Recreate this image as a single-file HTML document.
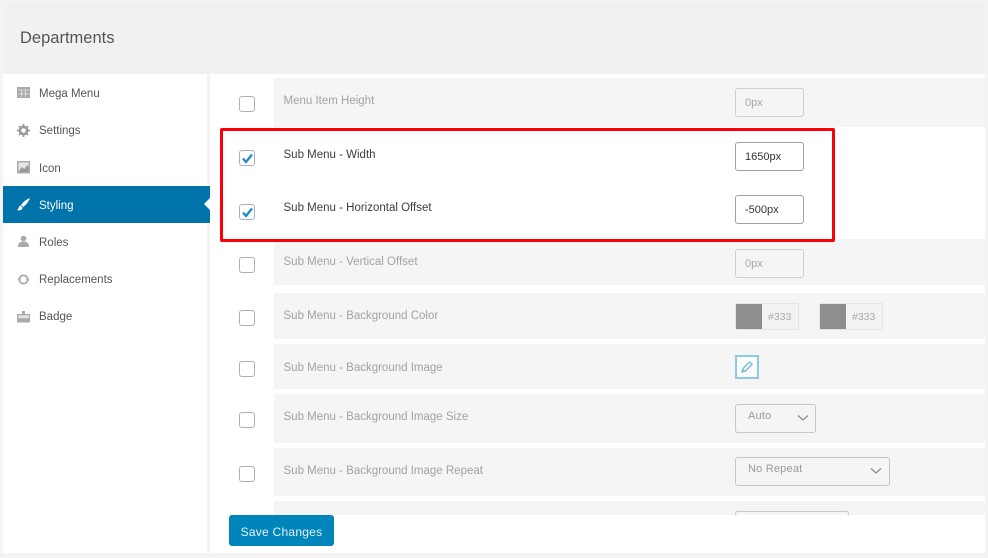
<!DOCTYPE html>
<html><head><meta charset="utf-8">
<style>
html,body{margin:0;padding:0}
body{width:988px;height:558px;position:relative;overflow:hidden;background:#f3f3f3;font-family:"Liberation Sans",sans-serif;font-size:11.5px;color:#444;filter:blur(.3px)}
div,svg,span{position:absolute;box-sizing:border-box}
.t{white-space:nowrap;line-height:14px}
.head{left:3px;top:3px;width:982px;height:71px;background:#f1f1f1}
.side{left:3px;top:74px;width:204px;height:479px;background:#fff}
.main{left:210px;top:74px;width:775px;height:479px;background:#fff}
.row{left:274px;width:711px;background:#f5f5f5}
.cb{left:239px;width:16px;height:16px;border:1.5px solid #a9b1bb;border-radius:3px;background:#fff}
.lab{left:283.5px;color:#a2a2a2}
.on{color:#3d3d3d}
.inp{left:735px;width:69px;height:29px;border:1px solid #ccd0d4;border-radius:3px;color:#a5a5a5;padding:7px 0 0 9px;line-height:14px;font-size:11px}
.inp.a{border-color:#9aa2ab;background:#fff;color:#333;height:29px}
.m{left:39px;color:#555}
.ic{left:17px;width:13px;height:13px}
.sel{left:735px;height:29px;border:1px solid #c3c7cb;border-radius:3px;color:#999;padding:4px 0 0 12px;line-height:14px;font-size:11px;letter-spacing:.2px}
.sw{height:27px;border:1px solid #e4e4e4;border-radius:2px;background:#f3f3f3;width:64px}
.sw i{position:absolute;left:0;top:0;width:26px;height:25px;background:#8e8e8e}
.sw b{position:absolute;left:32px;top:6px;font-weight:normal;font-size:10.5px;color:#aaa;line-height:14px}
</style></head><body>
<div class="head"></div>
<div class="t" style="left:20px;top:28px;font-size:16.5px;line-height:20px;color:#555">Departments</div>
<div class="side"></div>
<div class="main"></div>

<div style="left:3px;top:186px;width:207px;height:37px;background:#0073aa"></div>
<div style="left:204px;top:198px;width:0;height:0;border:6px solid transparent;border-right-color:#fff;border-left:0"></div>

<svg class="ic" style="top:86px" viewBox="0 0 13 13"><rect width="13" height="11" y="1" fill="#aaa"/><path d="M1 4h11M1 8h11M4.500 4v7M8.500 4v7" stroke="#e8e8e8" stroke-width=".8"/></svg>
<div class="t m" style="top:87px">Mega Menu</div>
<svg class="ic" style="top:124px" viewBox="0 0 13 13"><circle cx="6.500" cy="6.500" r="3.600" fill="none" stroke="#999" stroke-width="2.600"/><path d="M6.500 0v13M0 6.500h13M2 2l9 9M11 2l-9 9" stroke="#999" stroke-width="1.800" stroke-dasharray="2 9 2"/></svg>
<div class="t m" style="top:124px">Settings</div>
<svg class="ic" style="top:161px" viewBox="0 0 13 13"><rect width="13" height="12.500" fill="#aaa"/><rect x="1.500" y="1.500" width="10" height="9.500" fill="#e6e6e6"/><path d="M1.500 11l3-5 3 2 2.500-4 1.500 2v5z" fill="#999"/></svg>
<div class="t m" style="top:162px">Icon</div>
<svg class="ic" style="top:198px" viewBox="0 0 13 13"><path d="M13 0C9 1.500 5.500 4.500 4 7l2 2c2.500-1.500 5.500-5 7-9zM3.500 7.500C1.500 8 2 11 0 12c2.500 1 5.500 0 5.500-2.500z" fill="#fff"/></svg>
<div class="t m" style="top:199px;color:#fff">Styling</div>
<svg class="ic" style="top:235px" viewBox="0 0 13 13"><circle cx="6.500" cy="3.500" r="2.800" fill="#aaa"/><path d="M1 12c0-4 2-5.500 5.500-5.500S12 8 12 12z" fill="#aaa"/></svg>
<div class="t m" style="top:236px">Roles</div>
<svg class="ic" style="top:273px" viewBox="0 0 13 13"><circle cx="6.500" cy="6.500" r="4.200" fill="none" stroke="#aaa" stroke-width="1.800"/><path d="M0 6.500l2.500-2 2 2zM13 6.500l-2.500 2-2-2z" fill="#aaa"/></svg>
<div class="t m" style="top:273px">Replacements</div>
<svg class="ic" style="top:310px" viewBox="0 0 13 13"><rect x="0" y="4" width="13" height="8.500" fill="#aaa"/><rect x="1.200" y="5.200" width="10.600" height="3" fill="#e2e2e2"/><rect x="5" y="1" width="3" height="4" fill="#aaa"/></svg>
<div class="t m" style="top:310px">Badge</div>

<!-- rows -->
<div class="row" style="top:78px;height:49px"></div>
<div class="row" style="top:239px;height:46px"></div>
<div class="row" style="top:293px;height:46px"></div>
<div class="row" style="top:344px;height:45px"></div>
<div class="row" style="top:394px;height:49px"></div>
<div class="row" style="top:448px;height:48px"></div>
<div class="row" style="top:501px;height:14px"></div>

<div class="cb" style="top:96px"></div>
<div class="cb" style="top:150px"></div>
<div class="cb" style="top:204px"></div>
<div class="cb" style="top:257px"></div>
<div class="cb" style="top:310px"></div>
<div class="cb" style="top:361px"></div>
<div class="cb" style="top:412px"></div>
<div class="cb" style="top:466px"></div>
<svg style="left:241px;top:152px;width:13px;height:13px" viewBox="0 0 13 13"><path d="M2 6.500l3 3.500 6-7.500" fill="none" stroke="#1e8cbe" stroke-width="2.300"/></svg>
<svg style="left:241px;top:206px;width:13px;height:13px" viewBox="0 0 13 13"><path d="M2 6.500l3 3.500 6-7.500" fill="none" stroke="#1e8cbe" stroke-width="2.300"/></svg>

<div class="t lab" style="top:94px">Menu Item Height</div>
<div class="t lab on" style="top:148px">Sub Menu - Width</div>
<div class="t lab on" style="top:201px">Sub Menu - Horizontal Offset</div>
<div class="t lab" style="top:255px">Sub Menu - Vertical Offset</div>
<div class="t lab" style="top:309px">Sub Menu - Background Color</div>
<div class="t lab" style="top:361px">Sub Menu - Background Image</div>
<div class="t lab" style="top:410px">Sub Menu - Background Image Size</div>
<div class="t lab" style="top:464px">Sub Menu - Background Image Repeat</div>

<div class="t inp" style="top:88px">0px</div>
<div class="t inp a" style="top:142px">1650px</div>
<div class="t inp a" style="top:195px">-500px</div>
<div class="t inp" style="top:249px">0px</div>

<div class="sw" style="left:735px;top:303px"><i></i><b>#333</b></div>
<div class="sw" style="left:819px;top:303px"><i></i><b>#333</b></div>

<div style="left:735px;top:355px;width:24px;height:24px;border:2px solid #8ccbe2;background:#fbfbfb"></div>
<svg style="left:740px;top:360px;width:14px;height:14px" viewBox="0 0 14 14"><path d="M3 8.500L9.500 2l2.500 2.500L5.500 11 2 12z" fill="none" stroke="#7cc0dc" stroke-width="1.500"/><path d="M3 8.500l2.500 2.500L2 12z" fill="#7cc0dc"/></svg>

<div class="t sel" style="top:404px;width:81px">Auto</div>
<svg style="left:797px;top:414px;width:12px;height:8px" viewBox="0 0 12 8"><path d="M1 1.500l5 4.500 5-4.500" fill="none" stroke="#888" stroke-width="1.200"/></svg>
<div class="t sel" style="top:457px;width:155px;border-width:1.500px">No Repeat</div>
<svg style="left:870px;top:467px;width:12px;height:8px" viewBox="0 0 12 8"><path d="M1 1.500l5 4.500 5-4.500" fill="none" stroke="#888" stroke-width="1.200"/></svg>
<div style="left:735px;top:511px;width:114px;height:4px;border:1px solid #c3c7cb;border-bottom:0;border-radius:3px 3px 0 0"></div>

<!-- highlight -->
<div style="left:220px;top:128px;width:615px;height:114px;border:3px solid #fb0007;border-radius:2px"></div>

<div class="t" style="left:229px;top:515px;width:105px;height:31px;background:#0085ba;border-radius:3px;color:#e6f2f8;text-align:center;line-height:34px;font-size:12px;letter-spacing:.25px">Save Changes</div>
</body></html>
